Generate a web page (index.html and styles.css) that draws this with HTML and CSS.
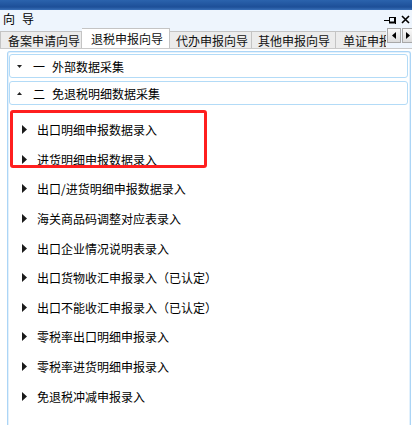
FILE: index.html
```html
<!DOCTYPE html>
<html>
<head>
<meta charset="utf-8">
<link rel="stylesheet" href="styles.css">
</head>
<body>
<div class="topbar"></div>
<div class="titlebar">
  <span class="title">向导</span>
  <span class="wicons">
    <svg class="pin" width="12" height="7" viewBox="0 0 12 7"><path d="M0 3.5H5" stroke="#000" stroke-width="1"/><rect x="5.5" y="0.5" width="5" height="5" fill="none" stroke="#000"/><path d="M5 5.5H11" stroke="#000" stroke-width="2"/><path d="M11.5 0V7" stroke="#000"/></svg>
    <svg class="close" width="9" height="9" viewBox="0 0 9 9"><path d="M1 1L8 8M8 1L1 8" stroke="#000" stroke-width="1.6"/></svg>
  </span>
</div>
<div class="tabbar">
  <div class="tabs">
    <div class="tab t1">备案申请向导</div>
    <div class="tab active">退税申报向导</div>
    <div class="tab t3">代办申报向导</div>
    <div class="tab t4">其他申报向导</div>
    <div class="tab last">单证申报向导</div>
  </div>
  <div class="scrollbtns">
    <div class="sbtn"><svg width="4" height="7" viewBox="0 0 4 7"><path d="M4 0V7L0 3.5Z" fill="#000"/></svg></div>
    <div class="sbtn"><svg width="4" height="7" viewBox="0 0 4 7"><path d="M0 0V7L4 3.5Z" fill="#000"/></svg></div>
  </div>
</div>
<div class="panel">
  <div class="head">
    <svg class="harrow" width="5" height="3" viewBox="0 0 5 3"><path d="M0 0H5L2.5 3Z" fill="#222"/></svg>
    <span class="num">一</span><span class="htext">外部数据采集</span>
  </div>
  <div class="head">
    <svg class="harrow" width="5" height="3" viewBox="0 0 5 3"><path d="M0 3H5L2.5 0Z" fill="#222"/></svg>
    <span class="num">二</span><span class="htext">免退税明细数据采集</span>
  </div>
  <ul class="items">
    <li class="item"><svg class="tri" width="5" height="9" viewBox="0 0 5 9"><path d="M0 0V9L5 4.5Z" fill="#1a1a1a"/></svg><span>出口明细申报数据录入</span></li>
    <li class="item"><svg class="tri" width="5" height="9" viewBox="0 0 5 9"><path d="M0 0V9L5 4.5Z" fill="#1a1a1a"/></svg><span>进货明细申报数据录入</span></li>
    <li class="item"><svg class="tri" width="5" height="9" viewBox="0 0 5 9"><path d="M0 0V9L5 4.5Z" fill="#1a1a1a"/></svg><span>出口/进货明细申报数据录入</span></li>
    <li class="item"><svg class="tri" width="5" height="9" viewBox="0 0 5 9"><path d="M0 0V9L5 4.5Z" fill="#1a1a1a"/></svg><span>海关商品码调整对应表录入</span></li>
    <li class="item"><svg class="tri" width="5" height="9" viewBox="0 0 5 9"><path d="M0 0V9L5 4.5Z" fill="#1a1a1a"/></svg><span>出口企业情况说明表录入</span></li>
    <li class="item"><svg class="tri" width="5" height="9" viewBox="0 0 5 9"><path d="M0 0V9L5 4.5Z" fill="#1a1a1a"/></svg><span>出口货物收汇申报录入（已认定）</span></li>
    <li class="item"><svg class="tri" width="5" height="9" viewBox="0 0 5 9"><path d="M0 0V9L5 4.5Z" fill="#1a1a1a"/></svg><span>出口不能收汇申报录入（已认定）</span></li>
    <li class="item"><svg class="tri" width="5" height="9" viewBox="0 0 5 9"><path d="M0 0V9L5 4.5Z" fill="#1a1a1a"/></svg><span>零税率出口明细申报录入</span></li>
    <li class="item"><svg class="tri" width="5" height="9" viewBox="0 0 5 9"><path d="M0 0V9L5 4.5Z" fill="#1a1a1a"/></svg><span>零税率进货明细申报录入</span></li>
    <li class="item"><svg class="tri" width="5" height="9" viewBox="0 0 5 9"><path d="M0 0V9L5 4.5Z" fill="#1a1a1a"/></svg><span>免退税冲减申报录入</span></li>
  </ul>
  <div class="highlight"></div>
</div>
</body>
</html>
```
FILE: styles.css
```css
html, body {
  margin: 0;
  padding: 0;
}
body {
  width: 412px;
  height: 425px;
  overflow: hidden;
  background: #fff;
  font-family: "Noto Sans CJK SC", "Noto Sans", sans-serif;
  font-size: 12px;
  color: #000;
}
.topbar {
  height: 10px;
  background: linear-gradient(#2b63ad, #1d4f98 70%, #3a70b8);
}
.titlebar {
  height: 18px;
  background: #eef5fd;
  display: flex;
  align-items: center;
  justify-content: space-between;
}
.title {
  padding-left: 3px;
  font-size: 12px;
  line-height: 18px;
  letter-spacing: 7px;
}
.wicons {
  display: flex;
  align-items: center;
  gap: 5px;
  padding-right: 2px;
}
.pin { margin-top: 2px; }
.tabbar {
  height: 20px;
  background: #eef5fd;
  display: flex;
  align-items: flex-end;
  border-bottom: 1px solid #c9c9c9;
}
.tabs {
  display: flex;
  align-items: flex-end;
  flex: 1;
  overflow: hidden;
  height: 20px;
}
.tab {
  height: 17px;
  line-height: 17px;
  padding: 0 0 0 7px;
  background: #ececec;
  border: 1px solid #c4c4c4;
  border-bottom: none;
  border-left: none;
  white-space: nowrap;
  font-size: 12px;
  color: #111;
  box-sizing: border-box;
  flex-shrink: 0;
}
.tab.t1 {
  border-left: 1px solid #c4c4c4;
  width: 82px;
}
.tab.active {
  height: 21px;
  line-height: 20px;
  background: #fff;
  padding-left: 9px;
  margin-bottom: -1px;
  width: 88px;
  position: relative;
  z-index: 1;
}
.tab.t3 { width: 82px; padding-left: 6px; }
.tab.t4 { width: 84px; padding-left: 6px; }
.scrollbtns {
  display: flex;
  align-self: flex-start;
}
.sbtn {
  width: 14px;
  height: 15px;
  box-sizing: border-box;
  border: 1px solid #a8a8a8;
  background: linear-gradient(#fafafa, #dcdcdc);
  display: flex;
  align-items: center;
  justify-content: center;
  margin-left: 1px;
}
.sbtn:last-child { width: 10px; border-right: none; }
.panel {
  position: relative;
  margin: 2px 0 0 7px;
  width: 404px;
  height: 380px;
  box-sizing: border-box;
  border: 1px solid #acd5f6;
  border-bottom: none;
  border-radius: 3px 3px 0 0;
  box-shadow: inset 0 0 0 1px #e3f1fc;
  padding: 2px 2px 0 1px;
}
.head {
  height: 24px;
  box-sizing: border-box;
  border: 1px solid #b3dbf7;
  border-radius: 3px;
  margin-bottom: 3px;
  display: flex;
  align-items: center;
  background: #fff;
}
.harrow {
  margin-left: 7px;
  margin-right: 11px;
}
.num {
  width: 19px;
}
.items {
  list-style: none;
  margin: 0;
  padding: 7px 0 0 0;
}
.item {
  height: 29.6px;
  display: flex;
  align-items: center;
}
.tri {
  margin-left: 13px;
  margin-right: 10px;
}
.highlight {
  position: absolute;
  left: 2px;
  top: 58px;
  width: 197px;
  height: 58px;
  box-sizing: border-box;
  border: 3px solid #ff1f1f;
  border-radius: 3px;
}
```
